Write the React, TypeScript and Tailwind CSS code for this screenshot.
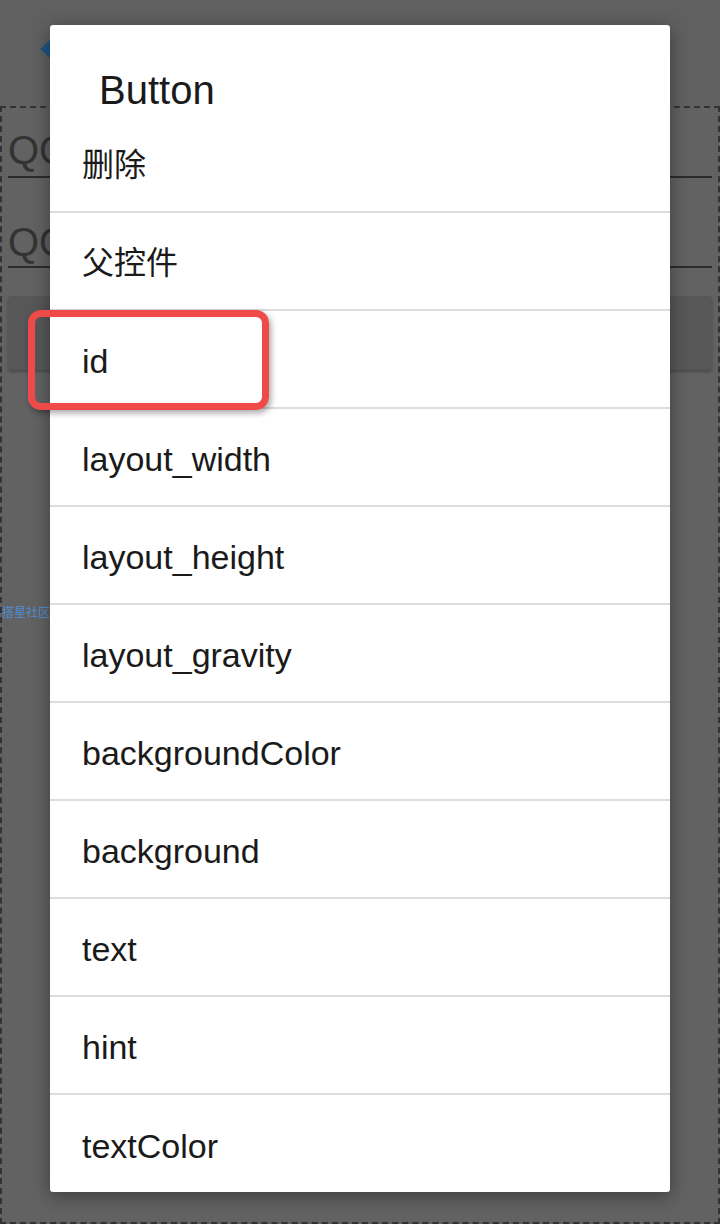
export default function App() {
    const items = [
        "删除",
        "父控件",
        "id",
        "layout_width",
        "layout_height",
        "layout_gravity",
        "backgroundColor",
        "background",
        "text",
        "hint",
        "textColor",
    ];

    return (
        <div
            className="relative w-[720px] h-[1224px] overflow-hidden bg-[#5f5f5f]"
            style={{ fontFamily: '"Liberation Sans", Arial, "Noto Sans CJK SC", sans-serif' }}
        >
            {/* Dimmed editor underneath */}
            <div className="flex flex-col h-full">
                <div className="relative h-[106px] shrink-0 bg-[#606060]">
                    <svg className="absolute left-[38px] top-[38px]" width="24" height="22" viewBox="0 0 24 22">
                        <polygon points="2,11 12,2 12,20" fill="#1d5586" />
                    </svg>
                </div>
                <div className="flex-1 flex flex-col border-2 border-dashed border-[#333333] bg-[#626262] px-[6px]">
                    <div className="h-[70px] flex items-end border-b-2 border-[#2b2b2b]">
                        <span className="text-[40px] leading-[48px] text-[#333] pb-[2px]">QQ</span>
                    </div>
                    <div className="h-[90px] flex items-end border-b-2 border-[#2b2b2b]">
                        <span className="text-[40px] leading-[48px] text-[#333]">QQ</span>
                    </div>
                    <div className="mt-[28px] h-[74px] rounded-[4px] bg-[#575757] shadow-[0_2px_3px_rgba(0,0,0,0.25)]" />
                    <div className="mt-[236px] -ml-[6px] text-[12px] leading-[14px] text-[#4d8fd6]">搭星社区</div>
                </div>
            </div>

            {/* Dialog */}
            <div className="absolute left-[50px] top-[25px] w-[620px] h-[1167px] bg-white rounded-[3px] shadow-[0_4px_18px_rgba(0,0,0,0.4)] flex flex-col text-[#1a1a1a]">
                <div className="h-[90px] shrink-0 pl-[49px] pt-[42px]">
                    <div className="text-[40px] leading-[46px]">Button</div>
                </div>
                {items.map((item, index) => (
                    <div
                        key={index}
                        className={
                            index === items.length - 1
                                ? "flex-1 flex items-center pl-[32px] pt-[4px]"
                                : "h-[98px] shrink-0 flex items-center pl-[32px] pt-[4px] border-b-2 border-[#dddddd]"
                        }
                    >
                        <span className={index < 2 ? "text-[32px] leading-[40px]" : "text-[34px] leading-[40px]"}>{item}</span>
                    </div>
                ))}
            </div>

            {/* Highlight annotation */}
            <div className="absolute left-[28px] top-[310px] w-[241px] h-[100px] border-[7px] border-[#ee4a48] rounded-[13px] shadow-[2px_3px_6px_rgba(0,0,0,0.35)]" />
        </div>
    );
}
